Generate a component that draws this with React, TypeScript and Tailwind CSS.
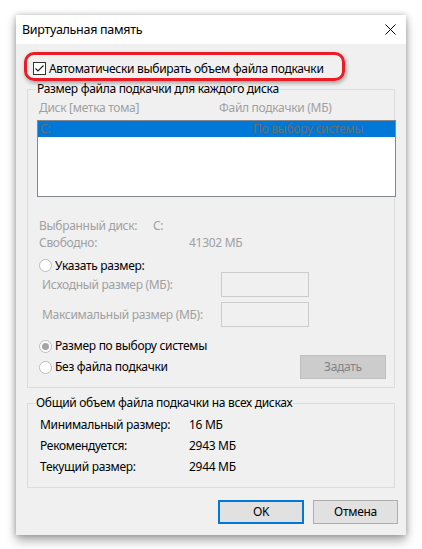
import React from "react";

const font = { fontFamily: '"Noto Sans", "Open Sans", sans-serif', letterSpacing: "-0.3px" };

function Radio({ checked = false }: { checked?: boolean }) {
  return (
    <span className="flex h-[13px] w-[13px] shrink-0 items-center justify-center rounded-full border border-[#bcbcbc] bg-white">
      {checked && <span className="h-[7px] w-[7px] rounded-full bg-[#a5a5a5]" />}
    </span>
  );
}

function InputRow({ label }: { label: string }) {
  return (
    <div className="flex h-[25px] items-center">
      <span className="ml-[14px] w-[179px] text-[#a0a0a0]">{label}</span>
      <span className="h-[25px] w-[88px] border border-[#cccccc] bg-[#f0f0f0]" />
    </div>
  );
}

function TotalRow({ label, value }: { label: string; value: string }) {
  return (
    <div className="flex h-[21px] items-center">
      <span className="ml-[12px] w-[149px]">{label}</span>
      <span>{value}</span>
    </div>
  );
}

export default function App() {
  return (
    <div className="min-h-[549px] bg-white pl-[16px] pt-[15px]" style={font}>
      <div className="relative flex w-[390px] flex-col text-[12px] leading-[16px] text-black shadow-[0_0_6px_rgba(0,0,0,0.25),0_6px_10px_rgba(0,0,0,0.3)]">
        {/* title bar */}
        <div className="flex h-[29px] items-center justify-between bg-white pl-[6px] pr-[8px]">
          <span className="text-[12.5px]">Виртуальная память</span>
          <svg width="11" height="11" viewBox="0 0 11 11" className="mr-[2px]">
            <path d="M0.5 0.5L10.5 10.5M10.5 0.5L0.5 10.5" stroke="#000" strokeWidth="1" />
          </svg>
        </div>

        <div className="flex flex-col bg-[#f0f0f0] px-[11px] pb-[11px] pt-[16px]">
          {/* auto checkbox */}
          <div className="flex h-[17px] items-center pl-[6px]">
            <span className="flex h-[13px] w-[13px] items-center justify-center border border-[#333333] bg-white">
              <svg width="11" height="11" viewBox="0 0 11 11">
                <path d="M1.5 5.5L4 8L9.5 2.5" fill="none" stroke="#222" strokeWidth="1.2" />
              </svg>
            </span>
            <span className="ml-[3px]">Автоматически выбирать объем файла подкачки</span>
          </div>

          {/* per-disk */}
          <fieldset className="mt-[4px] border border-[#dcdcdc] px-0 pb-[8px] pt-0">
            <legend className="ml-[8px] px-[1px]">Размер файла подкачки для каждого диска</legend>
            <div className="mt-[3px] flex h-[16px] items-center text-[#a0a0a0]">
              <span className="ml-[11px] w-[180px]">Диск [метка тома]</span>
              <span>Файл подкачки (МБ)</span>
            </div>
            <div className="ml-[9px] mr-[-2px] mt-[4px] h-[77px] border border-[#828790] bg-white">
              <div className="flex h-[16px] items-center bg-[#0078d7] text-[#6d6d6d]">
                <span className="ml-[2px] w-[213px]">C:</span>
                <span>По выбору системы</span>
              </div>
            </div>

            <div className="mt-[20px] flex h-[17px] items-center leading-[17px] text-[#a0a0a0]">
              <span className="ml-[11px] w-[114px] whitespace-nowrap">Выбранный диск:</span>
              <span>C:</span>
            </div>
            <div className="flex h-[17px] items-center leading-[17px] text-[#a0a0a0]">
              <span className="ml-[11px] w-[150px]">Свободно:</span>
              <span>41302 МБ</span>
            </div>

            <div className="ml-[11px] mt-[8px] flex h-[13px] items-center gap-[3px]">
              <Radio />
              <span>Указать размер:</span>
            </div>
            <InputRow label="Исходный размер (МБ):" />
            <div className="mt-[5px]">
              <InputRow label="Максимальный размер (МБ):" />
            </div>

            <div className="ml-[11px] mt-[11px] flex h-[16px] items-center gap-[3px]">
              <Radio checked />
              <span>Размер по выбору системы</span>
            </div>
            <div className="mt-[1px] flex h-[24px] items-center justify-between pl-[11px] pr-[8px]">
              <div className="flex items-center gap-[3px]">
                <Radio />
                <span>Без файла подкачки</span>
              </div>
              <span className="flex h-[24px] w-[86px] items-center justify-center border border-[#bfbfbf] bg-[#cccccc] text-[#838383]">
                Задать
              </span>
            </div>
          </fieldset>

          {/* totals */}
          <fieldset className="mt-[7px] border border-[#dcdcdc] px-0 pb-[10px] pt-[3px]">
            <legend className="ml-[7px] px-[1px]">Общий объем файла подкачки на всех дисках</legend>
            <TotalRow label="Минимальный размер:" value="16 МБ" />
            <TotalRow label="Рекомендуется:" value="2943 МБ" />
            <TotalRow label="Текущий размер:" value="2944 МБ" />
          </fieldset>

          <div className="mt-[12px] flex justify-end gap-[9px]">
            <span className="flex h-[24px] w-[86px] items-center justify-center border-2 border-[#0078d7] bg-[#e1e1e1]">
              OK
            </span>
            <span className="mr-[-3px] flex h-[24px] w-[85px] items-center justify-center border border-[#adadad] bg-[#e1e1e1]">
              Отмена
            </span>
          </div>
        </div>

        {/* annotation highlight */}
        <div className="pointer-events-none absolute left-[8px] top-[37px] h-[29px] w-[321px] rounded-[10px] border-[3px] border-[#ec1c24] shadow-[1px_2px_4px_rgba(0,0,0,0.35)]" />
      </div>
    </div>
  );
}
